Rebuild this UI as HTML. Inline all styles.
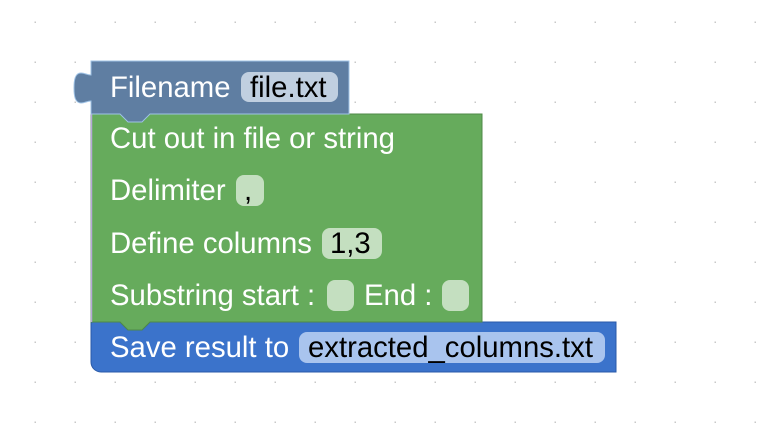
<!DOCTYPE html>
<html><head><meta charset="utf-8"><style>
html,body{margin:0;padding:0;width:768px;height:436px;overflow:hidden;background:#fff;}
svg text{font-family:"Liberation Sans",Arial,sans-serif;font-size:29.3px;}
</style></head><body>
<svg width="768" height="436" xmlns="http://www.w3.org/2000/svg">
<defs><pattern id="g" width="40" height="40" patternUnits="userSpaceOnUse" x="15" y="2">
<rect x="19.5" y="19.5" width="1.5" height="1.5" fill="#c8c8c8"/></pattern></defs>
<rect width="768" height="436" fill="url(#g)"/>
<path d="M91,322 H120 l8,8 h14 l8,-8 H616 V372 H101 a10,10 0 0 1 -10,-10 Z" fill="#3b73cb" stroke="#2a5aa8" stroke-width="1"/>
<path d="M91,114 H120 l8,8 h14 l8,-8 H482 V322 H150 l-8,8 h-14 l-8,-8 H91 Z" fill="#66ab5c" stroke="#4f8a47" stroke-width="1"/>
<line x1="91.5" y1="114" x2="91.5" y2="322" stroke="#b7a8d8" stroke-width="1.5"/>
<path d="M91,61 H349 V114 H150 l-8,8 h-14 l-8,-8 H91 V101 c-4,0 -6,2 -10,2 c-6,0 -7,-7 -7,-15 c0,-8 1,-15 7,-15 c4,0 6,2 10,2 Z" fill="#5f7ea2" stroke="#9fc3e6" stroke-width="1"/>
<rect x="241" y="72" width="97" height="30" rx="8" fill="#c0cfe0"/>
<text x="110" y="97" fill="#fff">Filename</text>
<text x="250" y="97" fill="#000">file.txt</text>
<text x="110" y="148" fill="#fff">Cut out in file or string</text>
<text x="110" y="200" fill="#fff">Delimiter</text>
<rect x="236" y="175" width="28" height="31" rx="8" fill="#c4dfc0"/>
<text x="244" y="200" fill="#000">,</text>
<text x="110" y="253" fill="#fff">Define columns</text>
<rect x="322" y="228" width="60" height="31" rx="8" fill="#c4dfc0"/>
<text x="330" y="253" fill="#000">1,3</text>
<text x="110" y="305" fill="#fff">Substring start :</text>
<rect x="327" y="280" width="27" height="31" rx="8" fill="#c4dfc0"/>
<text x="364" y="305" fill="#fff">End :</text>
<rect x="442" y="280" width="27" height="31" rx="8" fill="#c4dfc0"/>
<text x="110" y="357" fill="#fff">Save result to</text>
<rect x="299" y="332" width="306" height="31" rx="8" fill="#a9c4ee"/>
<text x="308" y="357" fill="#000">extracted_columns.txt</text>
</svg>
</body></html>
